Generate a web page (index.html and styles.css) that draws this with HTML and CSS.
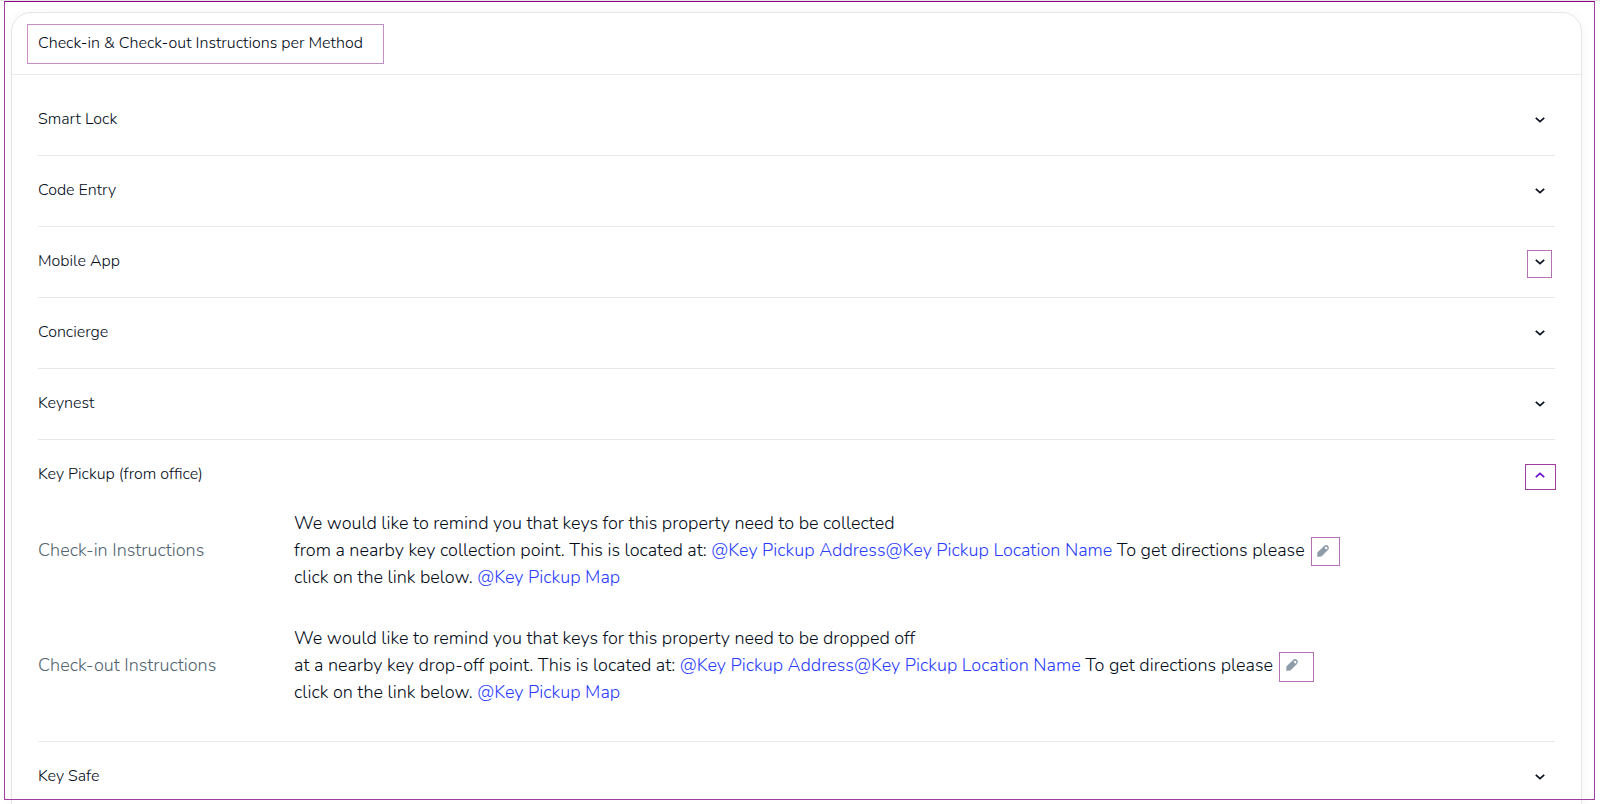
FILE: index.html
```html
<!DOCTYPE html>
<html lang="en">
<head>
<meta charset="utf-8">
<title>Check-in &amp; Check-out Instructions</title>
<link rel="stylesheet" href="styles.css">
</head>
<body>
<svg class="sprite" aria-hidden="true">
  <symbol id="chevron" viewBox="0 0 12 12"><path d="M1.8 3.8 L6 7.6 L10.2 3.8" fill="none" stroke="currentColor" stroke-width="1.7"/></symbol>
  <symbol id="pencil" viewBox="0 0 12 12"><path fill="currentColor" fill-rule="evenodd" d="M0.2 11.8 L0.4 7.6 L7 1.1 Q9.2 -0.8 11.1 0.9 Q12.8 2.8 11 5 L4.4 11.4 Z M7.7 2.9 L9.3 4.5 A1.2 1.2 0 0 0 9.9 2.3 A1.2 1.2 0 0 0 7.7 2.9 Z"/></symbol>
</svg>
<div class="page">
  <main class="card">
    <header class="card-header"><h1 class="title">Check-in &amp; Check-out Instructions per Method</h1></header>
    <div class="methods">
      <section class="method"><div class="method-head"><h2 class="name">Smart Lock</h2><button class="toggle" aria-label="Expand Smart Lock"><svg class="icon"><use href="#chevron"/></svg></button></div></section>
      <section class="method"><div class="method-head"><h2 class="name">Code Entry</h2><button class="toggle" aria-label="Expand Code Entry"><svg class="icon"><use href="#chevron"/></svg></button></div></section>
      <section class="method"><div class="method-head"><h2 class="name">Mobile App</h2><button class="toggle marked" aria-label="Expand Mobile App"><svg class="icon"><use href="#chevron"/></svg></button></div></section>
      <section class="method"><div class="method-head"><h2 class="name">Concierge</h2><button class="toggle" aria-label="Expand Concierge"><svg class="icon"><use href="#chevron"/></svg></button></div></section>
      <section class="method"><div class="method-head"><h2 class="name">Keynest</h2><button class="toggle" aria-label="Expand Keynest"><svg class="icon"><use href="#chevron"/></svg></button></div></section>
      <section class="method">
        <div class="method-head"><h2 class="name">Key Pickup (from office)</h2><button class="toggle open" aria-expanded="true" aria-label="Collapse Key Pickup"><svg class="icon"><use href="#chevron"/></svg></button></div>
        <div class="details">
          <div class="detail">
            <h3 class="label">Check-in Instructions</h3>
            <p class="text">We would like to remind you that keys for this property need to be collected<br>from a nearby key collection point. This is located at: <a href="#">@Key Pickup Address</a><a href="#">@Key Pickup Location Name</a> To get directions please<br>click on the link below. <a href="#">@Key Pickup Map</a></p>
            <button class="edit" aria-label="Edit check-in instructions"><svg class="icon"><use href="#pencil"/></svg></button>
          </div>
          <div class="detail">
            <h3 class="label">Check-out Instructions</h3>
            <p class="text">We would like to remind you that keys for this property need to be dropped off<br>at a nearby key drop-off point. This is located at: <a href="#">@Key Pickup Address</a><a href="#">@Key Pickup Location Name</a> To get directions please<br>click on the link below. <a href="#">@Key Pickup Map</a></p>
            <button class="edit wide" aria-label="Edit check-out instructions"><svg class="icon"><use href="#pencil"/></svg></button>
          </div>
        </div>
      </section>
      <section class="method"><div class="method-head"><h2 class="name">Key Safe</h2><button class="toggle" aria-label="Expand Key Safe"><svg class="icon"><use href="#chevron"/></svg></button></div></section>
    </div>
  </main>
  <div class="frame"></div>
</div>
</body>
</html>
```
FILE: styles.css
```css
* { box-sizing: border-box; }
body {
  margin: 0;
  background: #fff;
  color: #030c18;
  font-family: Nunito, Lato, sans-serif;
  font-weight: 300;
}
.sprite { position: absolute; width: 0; height: 0; }
h1, h2, h3, p { margin: 0; font-weight: inherit; }
button { border: 0; padding: 0; background: none; color: inherit; cursor: pointer; }
.icon { display: block; width: 12px; height: 12px; }

.page {
  position: relative;
  height: 100vh;
  padding: 11px 18px 0 11px;
  overflow: hidden;
  border-top: 1px solid #e6e6e6;
}
.frame {
  position: absolute;
  inset: 0 5px 4px 4px;
  border: 1px solid #a13fa1;
  border-top-color: #8b008b;
  pointer-events: none;
}
.card {
  border: 1px solid #e3e5e7;
  border-radius: 20px;
  box-shadow: 0 0 12px rgba(0, 0, 0, 0.04);
}
.card-header {
  padding: 11px 15px 10px;
  border-bottom: 1px solid #e9ebed;
}
.title {
  width: fit-content;
  padding: 0 20px 2px 10px;
  border: 1px solid #c48fc4;
  color: #000814;
  font-size: 16px;
  line-height: 36px;
}
.methods { padding: 10px 26px; }
.method { border-bottom: 1px solid #e6e8ea; }
.method:last-child { border-bottom: 0; }
.method-head {
  display: flex;
  align-items: center;
  justify-content: space-between;
  height: 70px;
}
.name { padding-bottom: 2px; font-size: 16px; line-height: 24px; }
.toggle {
  position: relative;
  display: grid;
  place-items: center;
  width: 30px;
  height: 32px;
  color: #0b1220;
}
.toggle.open { color: #6a12c9; }
.toggle.open .icon { transform: rotate(180deg); }
.marked::after, .open::after {
  content: "";
  position: absolute;
  inset: 4px 3px 0 2px;
  border: 1px solid #b56fb5;
}
.open::after { inset: 5px -1px 1px 0; border-color: #a13fa1; }
.details { display: grid; gap: 34px; padding-bottom: 35px; }
.detail {
  display: flex;
  align-items: center;
  font-size: 18px;
  line-height: 27px;
}
.label { flex: 0 0 256px; color: #52646f; font-size: 18px; }
.text a { color: #2a3cff; text-decoration: none; }
.edit {
  flex: none;
  margin: 2px 0 0 6px;
  padding: 7px 10px 8px 5px;
  border: 1px solid #b56fb5;
  color: #8e9ba9;
}
.edit.wide { padding: 6px 15px 10px 6px; }
```
